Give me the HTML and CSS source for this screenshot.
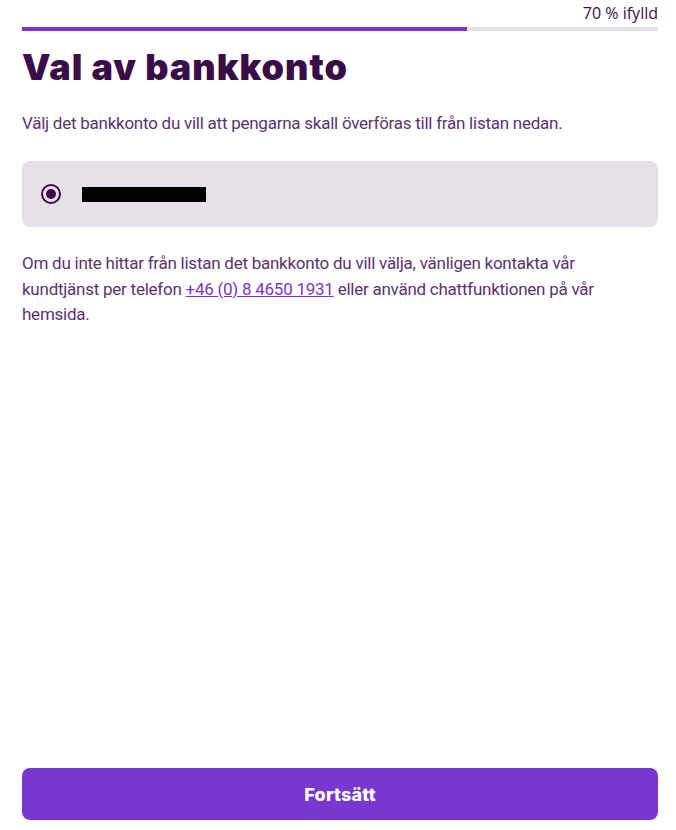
FILE: index.html
```html
<!DOCTYPE html>
<html lang="sv">
<head>
<meta charset="utf-8">
<title>Val av bankkonto</title>
<link rel="stylesheet" href="styles.css">
</head>
<body>
<div class="page">
  <div class="progress">
    <div class="progress-label">70 % ifylld</div>
    <div class="progress-track"><div class="progress-fill" style="width:70%"></div></div>
  </div>
  <h1 class="title">Val av bankkonto</h1>
  <p class="lead">Välj det bankkonto du vill att pengarna skall överföras till från listan nedan.</p>
  <label class="account">
    <span class="radio"><span class="radio-dot"></span></span>
    <span class="account-name"></span>
  </label>
  <p class="info">Om du inte hittar från listan det bankkonto du vill välja, vänligen kontakta vår kundtjänst per telefon <a class="phone" href="#">+46 (0) 8 4650 1931</a> eller använd chattfunktionen på vår hemsida.</p>
  <button class="submit" type="button">Fortsätt</button>
</div>
</body>
</html>
```

FILE: styles.css
```css
html, body {
  margin: 0;
  padding: 0;
  background: #ffffff;
}

.page {
  box-sizing: border-box;
  min-height: 100vh;
  padding: 0 18px 10px 22px;
  display: flex;
  flex-direction: column;
  font-family: "Roboto", "Liberation Sans", sans-serif;
  color: #5a3470;
}

.progress {
  padding-top: 1px;
}

.progress-label {
  font-family: "Open Sans", "Noto Sans", sans-serif;
  font-size: 16px;
  line-height: 24px;
  color: #3b0d4a;
  text-align: right;
}

.progress-track {
  margin-top: 2px;
  height: 4px;
  background: #e5e1e9;
}

.progress-fill {
  height: 100%;
  background: #7a36d0;
}

.title {
  margin: 15px 0 0;
  font-family: "Inter", "Roboto", sans-serif;
  font-weight: 900;
  font-size: 36px;
  line-height: 42px;
  letter-spacing: 1px;
  color: #3a0c48;
}

.lead {
  margin: 23px 0 0;
  font-size: 17px;
  line-height: 25px;
  letter-spacing: -0.25px;
}

.account {
  margin-top: 25px;
  height: 66px;
  box-sizing: border-box;
  padding: 0 19px;
  display: flex;
  align-items: center;
  gap: 21px;
  background: #e6e1e8;
  border-radius: 8px;
}

.radio {
  box-sizing: border-box;
  width: 20px;
  height: 20px;
  border: 2px solid #3a0c48;
  border-radius: 50%;
  display: flex;
  align-items: center;
  justify-content: center;
}

.radio-dot {
  width: 10px;
  height: 10px;
  border-radius: 50%;
  background: #3a0c48;
}

.account-name {
  width: 124px;
  height: 15px;
  background: #000000;
}

.info {
  margin: 24px 0 0;
  max-width: 610px;
  font-size: 17px;
  line-height: 25.5px;
  letter-spacing: -0.25px;
}

.phone {
  color: #7a36d0;
  text-decoration: underline;
}

.submit {
  margin-top: auto;
  height: 52px;
  width: 100%;
  border: none;
  border-radius: 8px;
  background: #7a36d0;
  color: #ffffff;
  font-family: "Inter", "Roboto", sans-serif;
  font-weight: 800;
  font-size: 18px;
  letter-spacing: 0.2px;
  cursor: pointer;
}
```
